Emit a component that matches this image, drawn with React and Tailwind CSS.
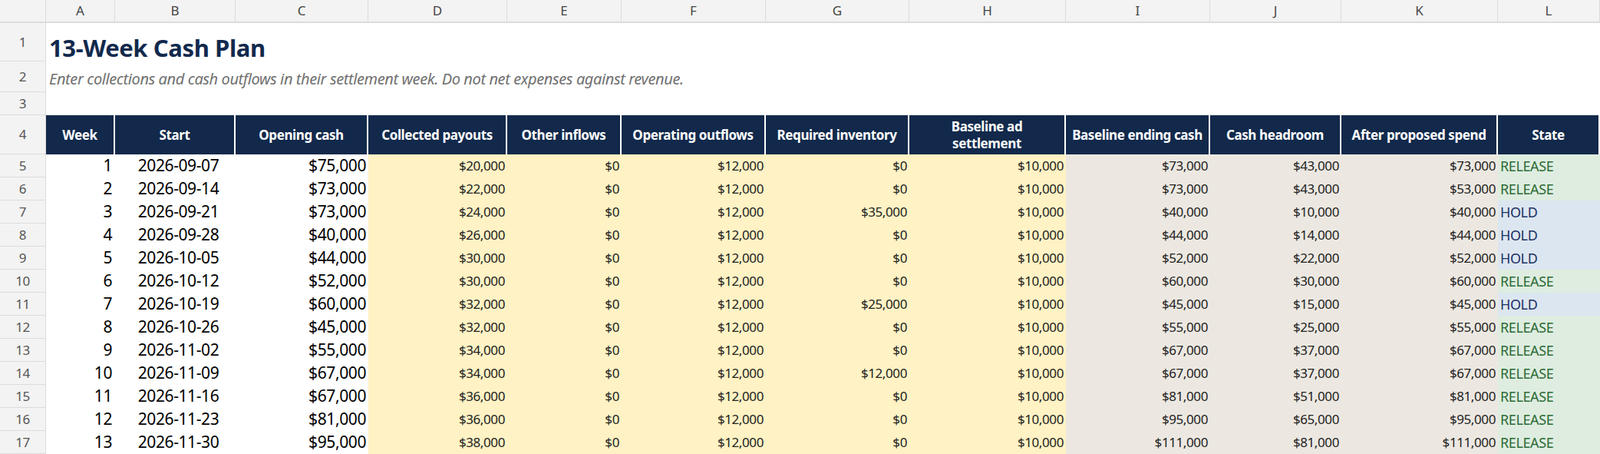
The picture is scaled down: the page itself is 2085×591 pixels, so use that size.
const cols = ["A","B","C","D","E","F","G","H","I","J","K","L"];
const heads = ["Week","Start","Opening cash","Collected payouts","Other inflows","Operating outflows","Required inventory","Baseline ad settlement","Baseline ending cash","Cash headroom","After proposed spend","State"];
const data = [
 [1,"2026-09-07",75,20,0,12,0,10,73,43,73,"RELEASE"],
 [2,"2026-09-14",73,22,0,12,0,10,73,43,53,"RELEASE"],
 [3,"2026-09-21",73,24,0,12,35,10,40,10,40,"HOLD"],
 [4,"2026-09-28",40,26,0,12,0,10,44,14,44,"HOLD"],
 [5,"2026-10-05",44,30,0,12,0,10,52,22,52,"HOLD"],
 [6,"2026-10-12",52,30,0,12,0,10,60,30,60,"RELEASE"],
 [7,"2026-10-19",60,32,0,12,25,10,45,15,45,"HOLD"],
 [8,"2026-10-26",45,32,0,12,0,10,55,25,55,"RELEASE"],
 [9,"2026-11-02",55,34,0,12,0,10,67,37,67,"RELEASE"],
 [10,"2026-11-09",67,34,0,12,12,10,67,37,67,"RELEASE"],
 [11,"2026-11-16",67,36,0,12,0,10,81,51,81,"RELEASE"],
 [12,"2026-11-23",81,36,0,12,0,10,95,65,95,"RELEASE"],
 [13,"2026-11-30",95,38,0,12,0,10,111,81,111,"RELEASE"],
];
const money = (k) => k === 0 ? "$0" : "$" + k + ",000";

function RowNum({ n, h }) {
  return <div className={`bg-[#f3f3f3] border-b border-r border-[#dcdcdc] flex items-center justify-center text-[17px] text-[#555] font-['Open_Sans',sans-serif] ${h}`}>{n}</div>;
}

export default function App() {
  return (
    <div className="w-[2085px] h-[591px] overflow-hidden bg-white font-['Liberation_Sans',Arial,sans-serif] tracking-[-0.4px]">
      <div className="grid grid-cols-[60px_90px_157px_173px_181px_149px_188px_187px_204px_188px_171px_204px_133px]">
        <div className="h-[30px] bg-[#f3f3f3] border-b-2 border-r border-[#dcdcdc]" />
        {cols.map(c => <div key={c} className="h-[30px] bg-[#f3f3f3] border-b-2 border-r border-[#dcdcdc] flex items-center justify-center text-[17px] text-[#444] tracking-normal font-['Open_Sans',sans-serif]">{c}</div>)}
        <RowNum n={1} h="h-[50px]" />
        <div className="col-span-12 h-[50px] flex items-center pl-[4px] pt-[14px] text-[31px] font-bold text-[#12294d]">13-Week Cash Plan</div>
        <RowNum n={2} h="h-[40px]" />
        <div className="col-span-12 h-[40px] flex items-center pl-[4px] pt-[6px] text-[20px] italic text-[#707070]">Enter collections and cash outflows in their settlement week. Do not net expenses against revenue.</div>
        <RowNum n={3} h="h-[30px]" />
        <div className="col-span-12 h-[30px]" />
        <RowNum n={4} h="h-[51px]" />
        {heads.map(h => <div key={h} className="h-[51px] bg-[#12294b] border-r-2 border-white last:border-r-0 flex items-center justify-center text-center leading-[22px] text-white font-bold text-[17px] px-2">{h}</div>)}
        {data.map((r, i) => {
          const rel = r[11] === "RELEASE";
          return [
            <RowNum key={"n"+i} n={i+5} h="h-[30px]" />,
            <div key={"a"+i} className="h-[30px] flex items-center justify-end pr-[4px] text-[21px] text-black">{r[0]}</div>,
            <div key={"b"+i} className="h-[30px] flex items-center justify-center pl-[8px] text-[21px] text-black">{r[1]}</div>,
            <div key={"c"+i} className="h-[30px] flex items-center justify-end pr-[3px] text-[21px] text-black">{money(r[2])}</div>,
            ...[3,4,5,6,7].map(j => <div key={j+"y"+i} className="h-[30px] bg-[#fff2c4] flex items-center justify-end pr-[3px] text-[17px] text-[#222]">{money(r[j])}</div>),
            ...[8,9,10].map(j => <div key={j+"g"+i} className="h-[30px] bg-[#ece8e1] flex items-center justify-end pr-[3px] text-[17px] text-[#222]">{money(r[j])}</div>),
            <div key={"l"+i} className={`h-[30px] flex items-center pl-[3px] text-[18px] ${rel ? "bg-[#deede0] text-[#2b6a36]" : "bg-[#dce6f1] text-[#1c3362]"}`}>{r[11]}</div>,
          ];
        })}
      </div>
    </div>
  );
}
